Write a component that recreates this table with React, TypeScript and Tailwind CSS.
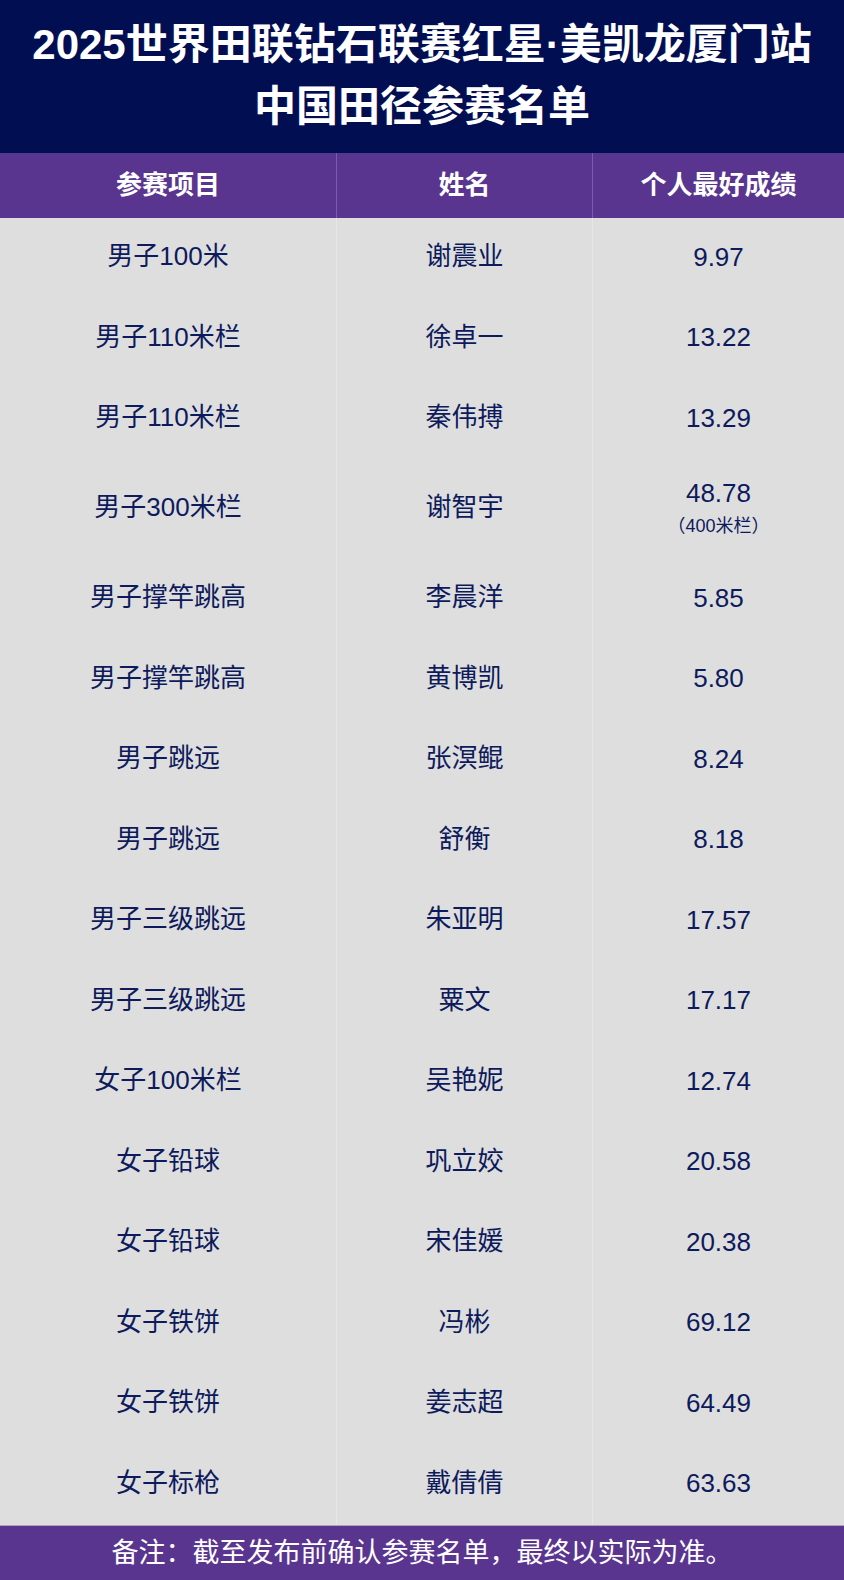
import React from 'react';

const rows = [
  { event: '男子100米', name: '谢震业', pb: '9.97' },
  { event: '男子110米栏', name: '徐卓一', pb: '13.22' },
  { event: '男子110米栏', name: '秦伟搏', pb: '13.29' },
  { event: '男子300米栏', name: '谢智宇', pb: '48.78', note: '（400米栏）' },
  { event: '男子撑竿跳高', name: '李晨洋', pb: '5.85' },
  { event: '男子撑竿跳高', name: '黄博凯', pb: '5.80' },
  { event: '男子跳远', name: '张溟鲲', pb: '8.24' },
  { event: '男子跳远', name: '舒衡', pb: '8.18' },
  { event: '男子三级跳远', name: '朱亚明', pb: '17.57' },
  { event: '男子三级跳远', name: '粟文', pb: '17.17' },
  { event: '女子100米栏', name: '吴艳妮', pb: '12.74' },
  { event: '女子铅球', name: '巩立姣', pb: '20.58' },
  { event: '女子铅球', name: '宋佳媛', pb: '20.38' },
  { event: '女子铁饼', name: '冯彬', pb: '69.12' },
  { event: '女子铁饼', name: '姜志超', pb: '64.49' },
  { event: '女子标枪', name: '戴倩倩', pb: '63.63' },
];

const font = "font-['Liberation_Sans','Noto_Sans_CJK_SC',sans-serif]";

const App = () => {
  return (
    <div className={`w-[844px] min-h-[1580px] bg-[#dedede] ${font}`}>
      <header className="bg-[#010e52] h-[153px] pt-[14px] text-center text-white font-bold text-[42px] leading-[62px]">
        <div>2025世界田联钻石联赛红星·美凯龙厦门站</div>
        <div>中国田径参赛名单</div>
      </header>

      <div className="grid grid-cols-[336px_256px_1fr] bg-[#5a3590] h-[65px] text-white font-bold text-[26px]">
        <div className="flex items-center justify-center">参赛项目</div>
        <div className="flex items-center justify-center border-l border-[#7b5ca9]">姓名</div>
        <div className="flex items-center justify-center border-l border-[#7b5ca9]">个人最好成绩</div>
      </div>

      <div className="text-[#0d1a5c] text-[26px]">
        {rows.map((r, i) => (
          <div
            key={i}
            className={`grid grid-cols-[336px_256px_1fr] ${r.note ? 'h-[99.5px]' : 'h-[80.5px]'}`}
          >
            <div className="flex items-center justify-center pb-[3px]">{r.event}</div>
            <div className="flex items-center justify-center border-l border-[#e6e6e6] pb-[3px]">{r.name}</div>
            <div className="flex flex-col items-center justify-center border-l border-[#e6e6e6] pb-[3px]">
              <span className="leading-[32px]">{r.pb}</span>
              {r.note && <span className="text-[18px] leading-[26px] mt-[4px]">{r.note}</span>}
            </div>
          </div>
        ))}
      </div>

      <footer className="h-[55px] bg-[#5a3590] border-t border-[#a9a6b4] flex items-center justify-center text-white text-[27px]">
        备注：截至发布前确认参赛名单，最终以实际为准。
      </footer>
    </div>
  );
};

export default App;
